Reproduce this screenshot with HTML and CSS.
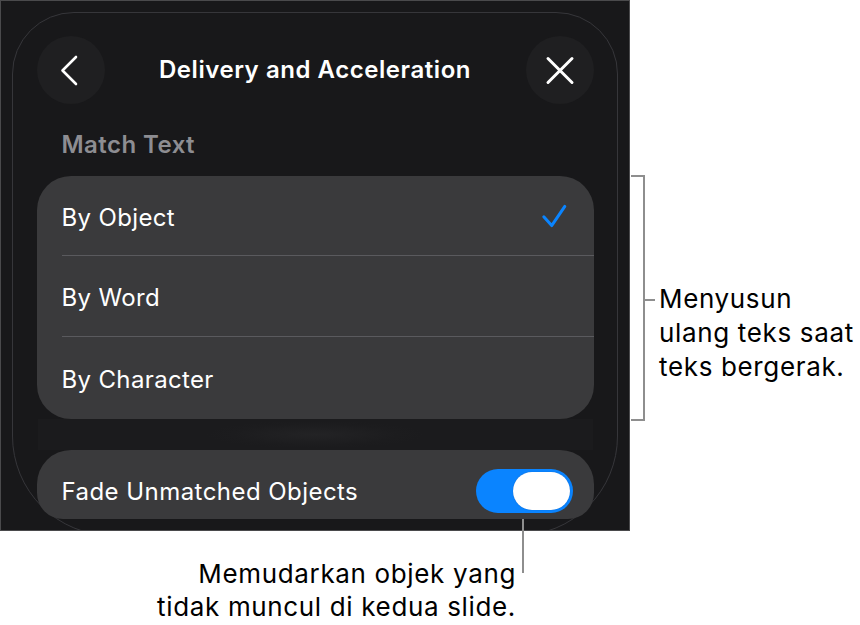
FILE: index.html
```html
<!DOCTYPE html>
<html lang="en">
<head>
<meta charset="utf-8">
<title>Delivery and Acceleration</title>
<link rel="stylesheet" href="styles.css">
</head>
<body>
<div class="page">
  <div class="shot">
    <div class="panel">
      <div class="header">
        <button class="round-btn" aria-label="Back">
          <svg width="68" height="68" viewBox="0 0 68 68"><path d="M39 21 L25.5 34.5 L39 48" fill="none" stroke="#fff" stroke-width="2.6" stroke-linecap="round" stroke-linejoin="round"/></svg>
        </button>
        <div class="title">Delivery and Acceleration</div>
        <button class="round-btn" aria-label="Close">
          <svg width="68" height="68" viewBox="0 0 68 68"><path d="M22 22.5 L46 46.5 M46 22.5 L22 46.5" fill="none" stroke="#fff" stroke-width="3" stroke-linecap="round"/></svg>
        </button>
      </div>
      <div class="section-label">Match Text</div>
      <div class="group">
        <div class="row"><span>By Object</span>
          <svg class="check" width="26" height="26" viewBox="0 0 26 26"><path d="M2.8 13.8 L10.7 22.6 L23.8 3.4" fill="none" stroke="#0a84ff" stroke-width="3" stroke-linecap="round" stroke-linejoin="round"/></svg>
        </div>
        <div class="row"><span>By Word</span></div>
        <div class="row"><span>By Character</span></div>
      </div>
      <div class="glow"></div>
      <div class="fade-row">
        <span>Fade Unmatched Objects</span>
        <div class="toggle"><div class="knob"></div></div>
      </div>
    </div>
  </div>

  <div class="bracket"></div>
  <div class="bracket-tick"></div>
  <div class="note note-right">Menyusun<br>ulang teks saat<br>teks bergerak.</div>

  <div class="leader"></div>
  <div class="note note-bottom">Memudarkan objek yang<br>tidak muncul di kedua slide.</div>
</div>
</body>
</html>
```

FILE: styles.css
```css
* { box-sizing: border-box; }
html, body { margin: 0; padding: 0; background: #fff; }
body {
  font-family: "Inter", "Noto Sans", "Liberation Sans", sans-serif;
  width: 860px;
  height: 625px;
  overflow: hidden;
}
.page {
  position: relative;
  width: 860px;
  height: 625px;
}
.shot {
  width: 630px;
  height: 531px;
  background: #18181a;
  border: 1px solid #4a4a4c;
  padding: 11px 12px 0 11px;
  overflow: hidden;
}
.panel {
  position: relative;
  width: 606px;
  height: 524px;
  border: 1.5px solid #36363a;
  border-radius: 62px 62px 100px 100px;
  padding: 23px 23.5px 0 23.5px;
}
.header {
  display: flex;
  align-items: center;
  justify-content: space-between;
  height: 68px;
}
.round-btn {
  width: 68px;
  height: 68px;
  border-radius: 50%;
  background: #1f1f21;
  border: 0;
  padding: 0;
  display: block;
}
.round-btn svg { display: block; }
.title {
  color: #fff;
  font-size: 24px;
  font-weight: 600;
  letter-spacing: 0.55px;
  margin-top: -2px;
}
.section-label {
  margin: 27px 0 0 25px;
  height: 28px;
  line-height: 28px;
  color: #8d8d92;
  font-size: 24px;
  font-weight: 600;
  letter-spacing: 0.45px;
}
.group {
  margin-top: 17px;
  background: #3a3a3c;
  border-radius: 34px;
  padding-left: 25px;
  height: 243px;
  position: relative;
  z-index: 1;
}
.row {
  height: 81px;
  display: flex;
  align-items: center;
  justify-content: space-between;
  padding: 3px 24px 0 0;
  color: #fff;
  font-size: 24px;
  letter-spacing: 0.35px;
  border-bottom: 1px solid #5a5a5e;
}
.row:first-child { height: 80px; }
.row:last-child { border-bottom: 0; }
.check { margin: -3px 3px 0 0; }
.glow {
  height: 31px;
  background: radial-gradient(ellipse 110px 14px at 50% 50%, #232325 0%, #1c1c1e 75%, #1b1b1d 100%);
  margin: 0 1px;
}
.fade-row {
  height: 69px;
  background: #3a3a3c;
  border-radius: 34px 34px 26px 26px;
  display: flex;
  align-items: center;
  justify-content: space-between;
  padding: 13px 21px 0 25px;
  color: #fff;
  font-size: 24px;
  letter-spacing: 0.45px;
  position: relative;
  z-index: 1;
}
.toggle {
  width: 97px;
  height: 44px;
  border-radius: 22px;
  background: #0a84ff;
  padding: 3px 3px 3px 37px;
}
.knob {
  width: 57px;
  height: 38px;
  border-radius: 19px;
  background: #fff;
  box-shadow: 0 0 1px rgba(0, 60, 140, 0.6);
}

.bracket {
  position: absolute;
  left: 631px;
  top: 175px;
  width: 14px;
  height: 246px;
  border: 2px solid #8e8e8e;
  border-left: 0;
}
.bracket-tick {
  position: absolute;
  left: 643px;
  top: 299px;
  width: 12px;
  height: 2px;
  background: #8e8e8e;
}
.leader {
  position: absolute;
  left: 522px;
  top: 513px;
  width: 2px;
  height: 60px;
  background: #8e8e8e;
}
.note {
  position: absolute;
  color: #000;
  font-size: 26px;
  letter-spacing: 0.65px;
}
.note-right {
  left: 659px;
  top: 282px;
  line-height: 34px;
}
.note-bottom {
  right: 344px;
  top: 557px;
  line-height: 33px;
  text-align: right;
}
```
